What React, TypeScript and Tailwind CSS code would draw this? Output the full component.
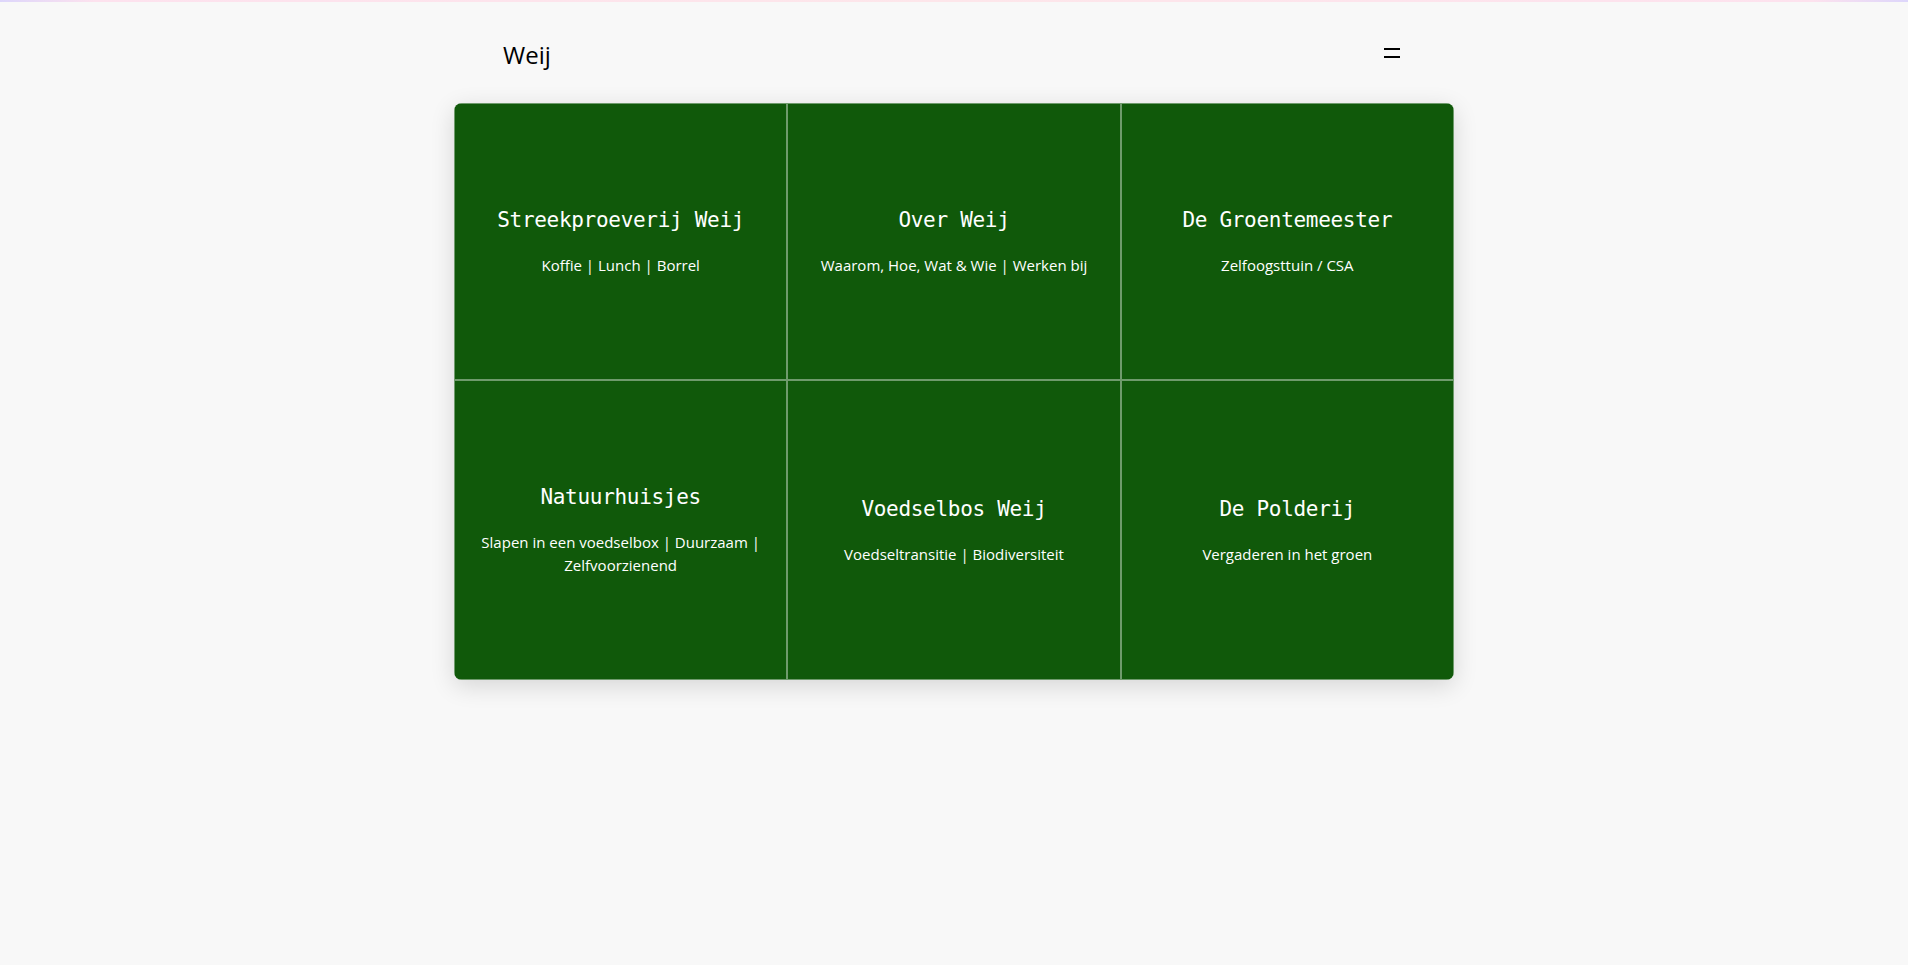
import React from "react";

type Tile = {
  title: string;
  parts: string[];
};

const tiles: Tile[] = [
  { title: "Streekproeverij Weij", parts: ["Koffie", "Lunch", "Borrel"] },
  { title: "Over Weij", parts: ["Waarom, Hoe, Wat & Wie", "Werken bij"] },
  { title: "De Groentemeester", parts: ["Zelfoogsttuin / CSA"] },
  { title: "Natuurhuisjes", parts: ["Slapen in een voedselbox", "Duurzaam", "Zelfvoorzienend"] },
  { title: "Voedselbos Weij", parts: ["Voedseltransitie", "Biodiversiteit"] },
  { title: "De Polderij", parts: ["Vergaderen in het groen"] },
];

function TileCell({ tile }: { tile: Tile }) {
  return (
    <a
      href="#"
      className="flex flex-col items-center justify-center border border-white/40 bg-[#10590a] px-5 pb-[102px] pt-[100px] text-center text-white"
    >
      <h2 className="font-['DejaVu_Sans_Mono',monospace] text-[21px] leading-8 tracking-[-0.3px] text-white">
        {tile.title}
      </h2>
      <p className="mt-[18px] font-['Open_Sans',sans-serif] text-[15px] leading-[23px] text-white">
        {tile.parts.map((p, i) => (
          <React.Fragment key={p}>
            {i > 0 && " | "}
            {p}
          </React.Fragment>
        ))}
      </p>
    </a>
  );
}

export default function App() {
  return (
    <div className="min-h-screen bg-[#f8f8f8] font-['Open_Sans',sans-serif]">
      {/* dunne kleurbalk bovenaan */}
      <div className="h-[2px] w-full bg-[linear-gradient(90deg,#ddd6fb,#fde2ee_5%,#fde6ea_50%,#fde2ee_95%,#ddd6fb)]" />

      <div className="mx-auto w-[1000px]">
        <header className="flex h-[101px] items-center justify-between pl-[49px] pr-[54px] pt-1">
          <span className="text-[24px] font-medium text-black">Weij</span>
          <button className="mb-[3px] flex w-4 flex-col gap-[6px]" aria-label="Menu">
            <span className="block h-[2px] w-4 bg-black" />
            <span className="block h-[2px] w-4 bg-black" />
          </button>
        </header>

        <div className="grid grid-cols-3 overflow-hidden rounded-lg shadow-[0_6px_24px_rgba(0,0,0,0.14)]">
          {tiles.map((t) => (
            <TileCell key={t.title} tile={t} />
          ))}
        </div>
      </div>
    </div>
  );
}
